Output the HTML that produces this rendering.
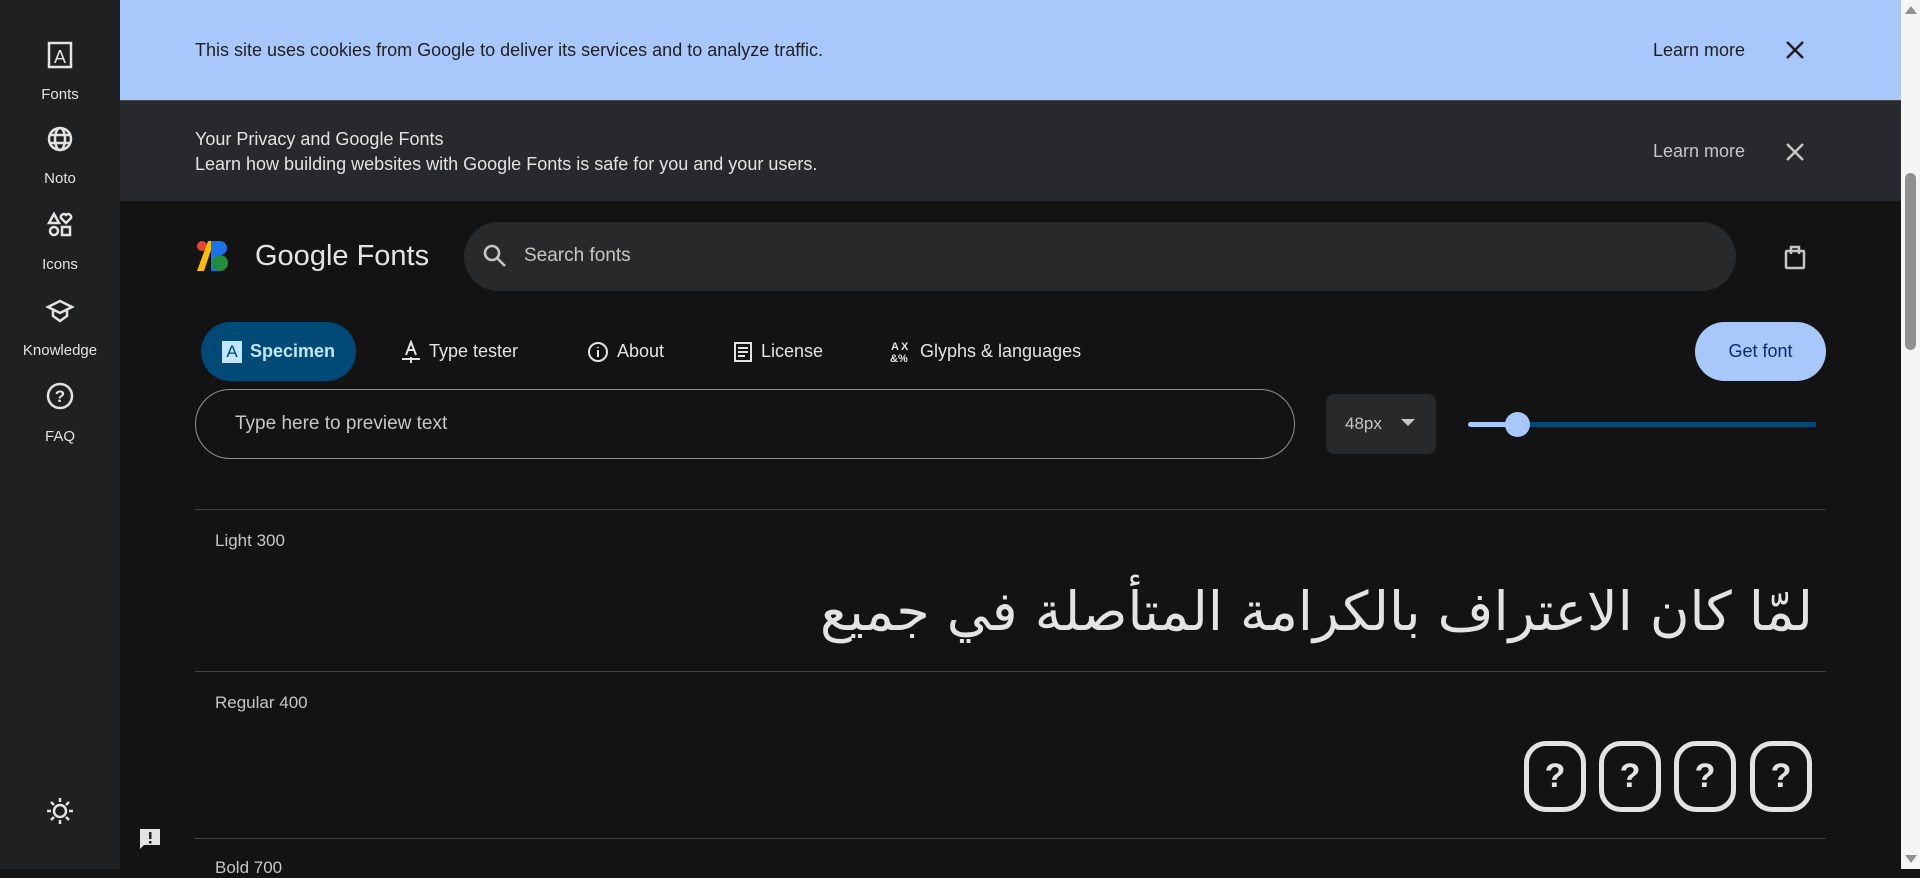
<!DOCTYPE html>
<html><head><meta charset="utf-8"><style>
*{box-sizing:border-box;margin:0;padding:0}
body{width:1920px;height:869px;overflow:hidden;background:#131313;font-family:"Liberation Sans",sans-serif;position:relative;color:#e3e3e3}
.abs{position:absolute}
#side{left:0;top:0;width:120px;height:869px;background:#1f2022}
.nav{position:absolute;left:0;width:120px;text-align:center;font-size:15px;color:#e3e3e3}
.nav svg{display:block;margin:0 auto}
#cookie{left:120px;top:0;width:1781px;height:100px;background:#a8c7fa;color:#1f1f1f;font-size:18px}
#priv{left:120px;top:100px;width:1781px;height:101px;background:#28292c;border-top:1px solid #444;font-size:18px;color:#e3e3e3}
#scroll{left:1901px;top:0;width:19px;height:869px;background:#f5f5f5}
.tab{position:absolute;top:322px;height:59px;display:flex;align-items:center;font-size:18px;color:#e3e3e3;gap:8px;white-space:nowrap}
.hr{position:absolute;left:195px;width:1631px;height:1px;background:#444}
.tofu{position:absolute;top:741px;width:62px;height:71px;border:5px solid #e3e3e3;border-radius:22px;font-size:34px;font-weight:bold;text-align:center;line-height:60px;color:#e3e3e3}
</style></head><body>
<div id="side" class="abs">
 <div class="nav" style="top:40px"><svg width="28" height="30" viewBox="0 0 28 30"><rect x="3" y="3" width="22" height="24" fill="none" stroke="#e3e3e3" stroke-width="2.5"/><text x="14" y="23" font-size="18" text-anchor="middle" fill="#e3e3e3" font-family="Liberation Sans">A</text></svg><div style="margin-top:16px">Fonts</div></div>
 <div class="nav" style="top:125px"><svg width="28" height="28" viewBox="0 0 28 28" fill="none" stroke="#e3e3e3" stroke-width="2.5"><circle cx="14" cy="14" r="11"/><ellipse cx="14" cy="14" rx="5" ry="11"/><line x1="3" y1="10" x2="25" y2="10"/><line x1="3" y1="18" x2="25" y2="18"/></svg><div style="margin-top:17px">Noto</div></div>
 <div class="nav" style="top:211px"><svg width="28" height="28" viewBox="0 0 28 28" fill="none" stroke="#e3e3e3" stroke-width="2.5"><path d="M8 3 L13 12 H3 Z"/><path d="M20 12 L15 7 a3 3 0 0 1 5-3 a3 3 0 0 1 5 3 Z"/><circle cx="8" cy="20" r="4"/><rect x="16" y="16" width="8" height="8"/></svg><div style="margin-top:17px">Icons</div></div>
 <div class="nav" style="top:297px"><svg width="30" height="28" viewBox="0 0 30 28" fill="none" stroke="#e3e3e3" stroke-width="2.5"><path d="M3 10 L15 4 L27 10 L15 16 Z"/><path d="M8 13 V19 L15 24 L22 19 V13"/></svg><div style="margin-top:17px">Knowledge</div></div>
 <div class="nav" style="top:381px"><svg width="30" height="30" viewBox="0 0 30 30"><circle cx="15" cy="15" r="12" fill="none" stroke="#e3e3e3" stroke-width="2.5"/><text x="15" y="21" font-size="17" font-weight="bold" text-anchor="middle" fill="#e3e3e3" font-family="Liberation Sans">?</text></svg><div style="margin-top:17px">FAQ</div></div>
 <svg class="abs" style="left:45px;top:796px" width="30" height="30" viewBox="0 0 30 30" fill="none" stroke="#e3e3e3" stroke-width="2.5"><circle cx="15" cy="15" r="6"/><path d="M15 2v4M15 24v4M2 15h4M24 15h4M6 6l3 3M21 21l3 3M6 24l3-3M21 9l3-3"/></svg>
</div>
<svg class="abs" style="left:137px;top:826px" width="26" height="26" viewBox="0 0 26 26"><path d="M3 3h20v16H7l-4 4z" fill="#e3e3e3"/><rect x="12" y="6" width="2.5" height="7" fill="#1f2022"/><rect x="12" y="15" width="2.5" height="2.5" fill="#1f2022"/></svg>

<div id="cookie" class="abs"><div class="abs" style="left:75px;top:40px">This site uses cookies from Google to deliver its services and to analyze traffic.</div>
<div class="abs" style="left:1533px;top:40px;font-size:18px">Learn more</div>
<svg class="abs" style="left:1665px;top:40px" width="20" height="20" viewBox="0 0 20 20" stroke="#1f1f1f" stroke-width="2.5"><path d="M2 2L18 18M18 2L2 18"/></svg></div>
<div id="priv" class="abs"><div class="abs" style="left:75px;top:28px">Your Privacy and Google Fonts</div><div class="abs" style="left:75px;top:53px">Learn how building websites with Google Fonts is safe for you and your users.</div>
<div class="abs" style="left:1533px;top:40px;font-size:18px;color:#c4c7c5">Learn more</div>
<svg class="abs" style="left:1665px;top:41px" width="20" height="20" viewBox="0 0 20 20" stroke="#c4c7c5" stroke-width="2.5"><path d="M2 2L18 18M18 2L2 18"/></svg></div>

<svg class="abs" style="left:196px;top:240px" width="34" height="32" viewBox="0 0 34 32"><circle cx="6" cy="6" r="5" fill="#ea4335"/><path d="M12 1 L18 1 L8 31 L1 31 Z" fill="#fbbc04"/><rect x="15" y="1" width="10" height="30" fill="#1a73e8"/><circle cx="24" cy="8" r="7" fill="#1a73e8"/><circle cx="24" cy="23" r="8" fill="#1e8e3e"/></svg>
<div class="abs" style="left:255px;top:240px;font-size:29px;color:#e3e3e3">Google Fonts</div>
<div class="abs" style="left:464px;top:222px;width:1272px;height:69px;border-radius:35px;background:#28292a"></div>
<svg class="abs" style="left:482px;top:243px" width="26" height="26" viewBox="0 0 26 26" fill="none" stroke="#c4c7c5" stroke-width="2.6"><circle cx="10" cy="10" r="7"/><path d="M15 15L23 23"/></svg>
<div class="abs" style="left:524px;top:245px;font-size:19px;color:#c4c7c5">Search fonts</div>
<svg class="abs" style="left:1783px;top:243px" width="24" height="28" viewBox="0 0 24 28" fill="none" stroke="#c4c7c5" stroke-width="2.5"><rect x="3" y="8" width="18" height="17" rx="1"/><path d="M8 8V4h8v4M8 8v3M16 8v3"/></svg>

<div class="abs" style="left:201px;top:322px;width:155px;height:59px;border-radius:30px;background:#004a77"></div>
<div class="tab" style="left:222px;color:#c2e7ff;font-weight:bold"><span style="display:inline-block;width:20px;height:22px;background:#c2e7ff;color:#004a77;font-size:17px;text-align:center;line-height:22px;font-weight:normal">A</span>Specimen</div>
<div class="tab" style="left:401px"><svg width="20" height="24" viewBox="0 0 20 24" fill="none" stroke="#e3e3e3" stroke-width="2"><path d="M5 15L10 2L15 15M7 10h6M1 19h18M10 17v6"/></svg>Type tester</div>
<div class="tab" style="left:587px"><svg width="22" height="22" viewBox="0 0 22 22" fill="none" stroke="#e3e3e3" stroke-width="2"><circle cx="11" cy="11" r="9"/><path d="M11 9v7M11 6v1"/></svg>About</div>
<div class="tab" style="left:733px"><svg width="20" height="22" viewBox="0 0 20 22" fill="none" stroke="#e3e3e3" stroke-width="2"><rect x="2" y="2" width="16" height="18"/><path d="M5 7h10M5 11h10M5 15h7"/></svg>License</div>
<div class="tab" style="left:890px"><svg width="22" height="24" viewBox="0 0 22 24"><text x="1" y="10" font-size="11" font-weight="bold" fill="#e3e3e3" font-family="Liberation Sans">A</text><text x="11" y="10" font-size="11" font-weight="bold" fill="#e3e3e3" font-family="Liberation Sans">X</text><text x="0" y="22" font-size="11" font-weight="bold" fill="#e3e3e3" font-family="Liberation Sans">&amp;%</text></svg>Glyphs &amp; languages</div>
<div class="abs" style="left:1695px;top:322px;width:131px;height:59px;border-radius:30px;background:#a8c7fa;color:#062e6f;font-size:18px;text-align:center;line-height:59px">Get font</div>

<div class="abs" style="left:195px;top:389px;width:1100px;height:70px;border:1px solid #8e918f;border-radius:35px"></div>
<div class="abs" style="left:235px;top:413px;font-size:19px;color:#c4c7c5">Type here to preview text</div>
<div class="abs" style="left:1326px;top:394px;width:110px;height:60px;border-radius:8px;background:#28292a"></div>
<div class="abs" style="left:1345px;top:414px;font-size:17px;color:#c4c7c5">48px</div>
<svg class="abs" style="left:1401px;top:419px" width="14" height="8"><path d="M0 0h14L7 7z" fill="#c4c7c5"/></svg>
<div class="abs" style="left:1468px;top:422px;width:50px;height:5px;border-radius:3px;background:#a8c7fa"></div>
<div class="abs" style="left:1518px;top:422px;width:298px;height:5px;background:#004a77"></div>
<div class="abs" style="left:1505px;top:412px;width:25px;height:25px;border-radius:50%;background:#a8c7fa"></div>

<div class="hr" style="top:509px"></div>
<div class="abs" style="left:215px;top:531px;font-size:17px;color:#c4c7c5">Light 300</div>
<div class="abs" style="right:107px;top:580px;font-size:54px;direction:rtl;font-family:'DejaVu Sans',sans-serif;font-weight:normal;color:#e3e3e3;white-space:nowrap">لمّا كان الاعتراف بالكرامة المتأصلة في جميع</div>
<div class="hr" style="top:671px"></div>
<div class="abs" style="left:215px;top:693px;font-size:17px;color:#c4c7c5">Regular 400</div>
<div class="tofu" style="left:1524px">?</div><div class="tofu" style="left:1599px">?</div><div class="tofu" style="left:1674px">?</div><div class="tofu" style="left:1750px">?</div>
<div class="hr" style="top:838px"></div>
<div class="abs" style="left:215px;top:858px;font-size:17px;color:#c4c7c5">Bold 700</div>

<div id="scroll" class="abs"><svg class="abs" style="left:4px;top:6px" width="12" height="8"><path d="M0 8L6 0L12 8z" fill="#909090"/></svg>
<div class="abs" style="left:4px;top:173px;width:11px;height:177px;border-radius:6px;background:#909090"></div>
<svg class="abs" style="left:4px;top:855px" width="12" height="8"><path d="M0 0L6 8L12 0z" fill="#909090"/></svg></div>
</body></html>
